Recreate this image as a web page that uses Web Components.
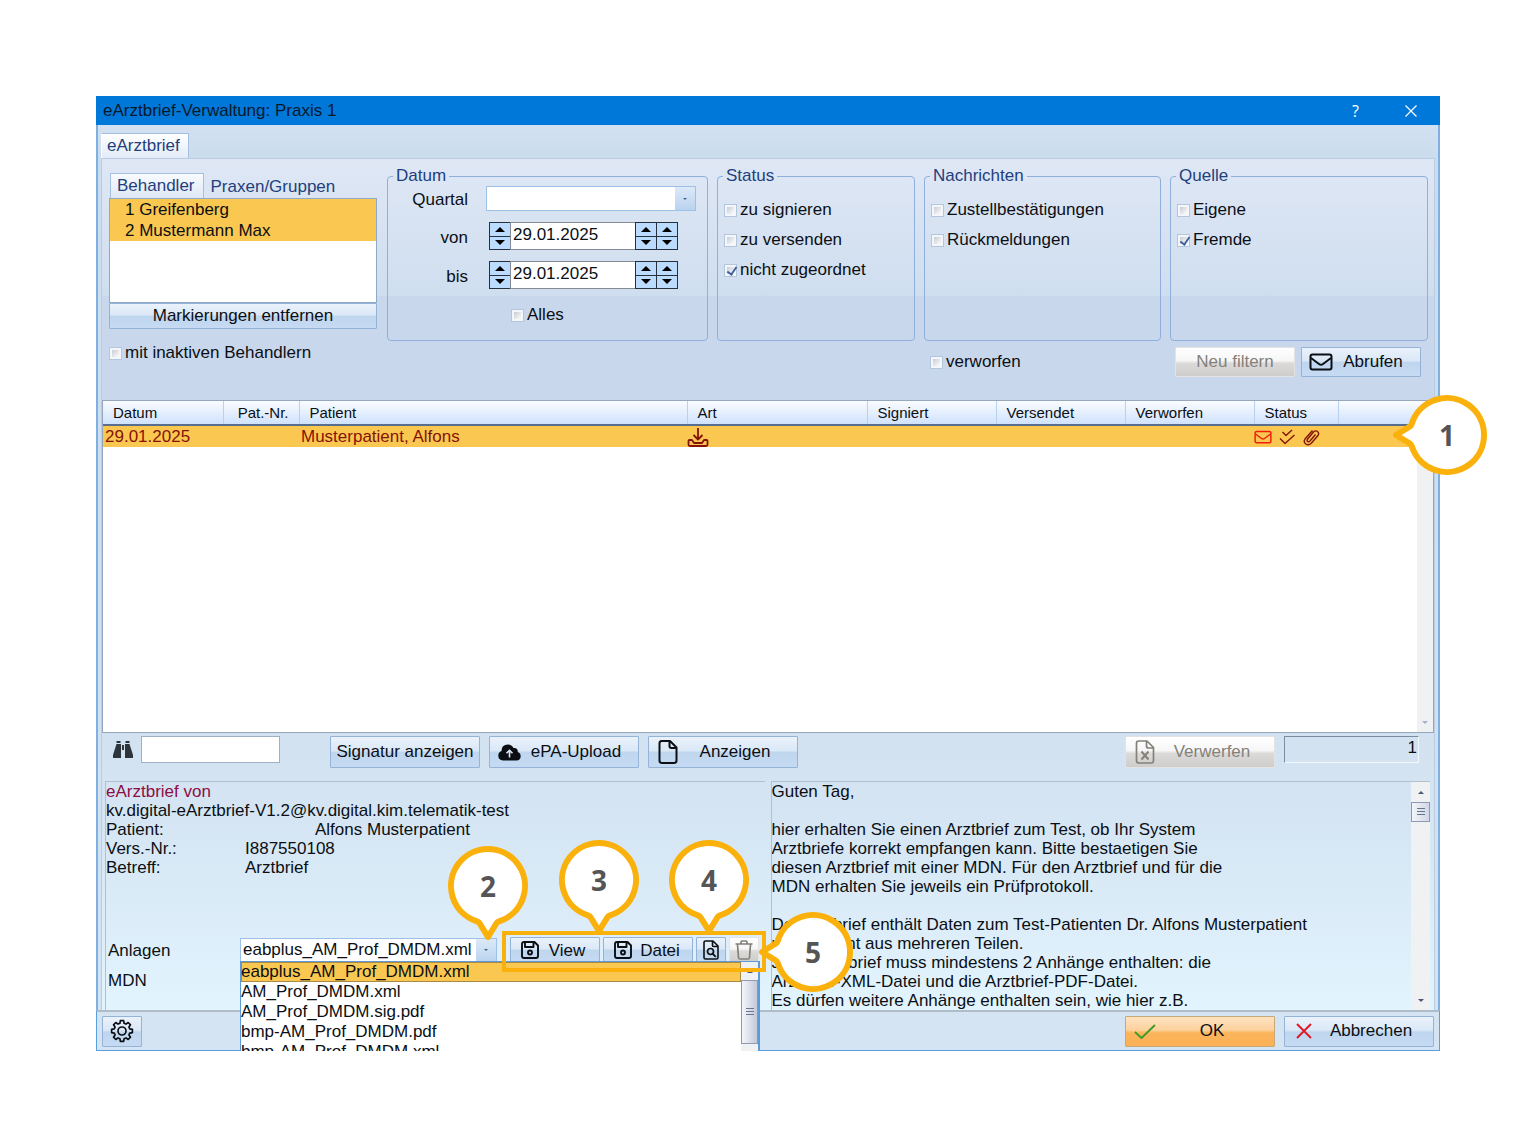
<!DOCTYPE html>
<html lang="de">
<head>
<meta charset="utf-8">
<title>eArztbrief-Verwaltung</title>
<style>
    body {
        margin: 0;
        padding: 96px;
        background: #fff;
        color: #0b0f14;
        font: 17px/20px "Liberation Sans", Arial, sans-serif;
        --line: #8fb0dc;
        --navy: #1f3f7d;
        --marked: #fac850;
        --accent: #fab10b;
        --btn: linear-gradient(#eaf2fb 0, #dbe8f7 45%, #bfd6ef 52%, #c6dbf3 100%);
    }
</style>
</head>
<body>

<ea-window caption="eArztbrief-Verwaltung: Praxis 1">
    <ea-filter></ea-filter>
    <ea-letters></ea-letters>
    <ea-toolbar></ea-toolbar>
    <ea-details>
        <ea-letter-info slot="info"></ea-letter-info>
        <ea-message slot="message">Guten Tag,

hier erhalten Sie einen Arztbrief zum Test, ob Ihr System
Arztbriefe korrekt empfangen kann. Bitte bestaetigen Sie
diesen Arztbrief mit einer MDN. Für den Arztbrief und für die
MDN erhalten Sie jeweils ein Prüfprotokoll.

Der Arztbrief enthält Daten zum Test-Patienten Dr. Alfons Musterpatient
und besteht aus mehreren Teilen.
Jeder Arztbrief muss mindestens 2 Anhänge enthalten: die
Arztbrief-XML-Datei und die Arztbrief-PDF-Datei.
Es dürfen weitere Anhänge enthalten sein, wie hier z.B.</ea-message>
    </ea-details>
    <ea-button slot="settings" icon="gear" label="Einstellungen" compact></ea-button>
    <ea-button slot="actions" icon="check" variant="primary">OK</ea-button>
    <ea-button slot="actions" icon="cross">Abbrechen</ea-button>
</ea-window>

<script>
(function() {
    'use strict';

    // Registers an element whose shadow root is cloned from a template.
    // "{attr}" in the markup is replaced by the host's attribute.
    function define(name, css, html, setup) {
        customElements.define(name, class extends HTMLElement {
            constructor() {
                super();
                this.attachShadow({ mode: 'open' });
            }
            connectedCallback() {
                if (this.shadowRoot.firstChild) return;
                var host = this;
                var tpl = document.createElement('template');
                tpl.innerHTML = '<style>:host,*{box-sizing:border-box}' + css + '</style>' +
                    html.replace(/\{(\w+)\}/g, function(m, key) {
                        return host.getAttribute(key) || '';
                    });
                this.shadowRoot.appendChild(tpl.content.cloneNode(true));
                if (setup) setup.call(this, this.shadowRoot);
            }
        });
    }

    /* ---------- icons ---------- */

    // Outline of a cog with eight teeth, centred in a 24 unit box.
    function gearPath() {
        var pts = [];
        for (var i = 0; i < 8; i++) {
            [[-15, 8], [-9, 10.500], [9, 10.500], [15, 8]].forEach(function(p) {
                var a = (i * 45 + p[0]) * Math.PI / 180;
                pts.push((12 + p[1] * Math.cos(a)).toFixed(2) + ' ' + (12 + p[1] * Math.sin(a)).toFixed(2));
            });
        }
        return 'M' + pts.join('L') + 'z';
    }

    var ICONS = {
        mail: [24, 18, '<rect x="1.500" y="1.500" width="21" height="15" rx="2"/><path d="M2 5l8 6q2 1.500 4 0l8-6"/>'],
        close: [12, 12, '<path d="M.5.5l11 11M11.500.5l-11 11" stroke-width="1.200"/>'],
        inbox: [22, 20, '<path d="M11 1v11M6.500 8l4.500 4.500L15.500 8M5 13H2.500Q1.500 13 1.500 14v3.500Q1.500 19 3 19h16q1.500 0 1.500-1.500V14q0-1-1-1H17l-2 3H7z" stroke-width="1.800"/>'],
        checks: [16, 16, '<path d="M3.500 3l3.500 3.500L13 1M1 9.500l5 5L15.500 6" stroke-width="1.400"/>'],
        clip: [17, 18, '<path d="M12.500 6.500l-5.500 6.500q-1.500 1.500-2.500.5t.2-2.500L10.500 4q2-2 4-.5t.5 4L8.500 15q-3 3-5.700 1T2 11L9.500 2.500" stroke-width="1.400"/>'],
        binoculars: [20, 19, '<path d="M3.500 1h4v2h-4zM12.500 1h4v2h-4z" fill="currentColor" stroke="none"/><path d="M3.500 4h4.500v14H0v-3zM16.500 4H12v14h8v-3zM9 5h2v5H9z" fill="currentColor" stroke="none"/>'],
        cloud: [23, 17, '<path d="M5 16.500Q.3 16 .3 11.500.3 8 3.500 7 3.500.5 9.800.5q4 0 5.700 3.500Q20 3.500 19.800 8q2.900 1 2.900 4.200 0 4-4.200 4.300z" fill="currentColor" stroke="none"/><path d="M11.500 13.500V6.500M8.500 9.200l3-3 3 3" stroke="#dbe8f7" stroke-width="1.600"/>'],
        file: [20, 24, '<path d="M3.500 1H12l6.500 6.500V20.500Q18.500 23 16 23H4Q1.500 23 1.500 20.500V3.500Q1.500 1 3.500 1zM11.500 1.500V6q0 2 2 2h4.500" stroke-width="2"/>'],
        filex: [20, 24, '<path d="M3.500 1H12l6.500 6.500V20.500Q18.500 23 16 23H4Q1.500 23 1.500 20.500V3.500Q1.500 1 3.500 1zM11.500 1.500V6q0 2 2 2h4.500" stroke-width="1.700"/><path d="M6.500 11.500l7 8M13.500 11.500l-7 8" stroke-width="2"/>'],
        disk: [18, 18, '<path d="M3 1h10.500L17 4.500V15q0 2-2 2H3q-2 0-2-2V3q0-2 2-2zM4 1v5h8.500V1" stroke-width="1.900"/><circle cx="9" cy="11.500" r="2" stroke-width="1.900"/>'],
        search: [16, 20, '<path d="M2.500 1H10l5 5v11.500q0 1.500-1.500 1.500h-11Q1 19 1 17.500v-15Q1 1 2.500 1zM9.500 1v4.500q0 1 1 1H15" stroke-width="1.600"/><circle cx="7.500" cy="11.500" r="3" stroke-width="1.700"/><path d="M9.800 13.800l3 3" stroke-width="1.900"/>'],
        trash: [18, 20, '<path d="M.5 4h17M5.500 4l1-3h5l1 3M2.500 4.500l1 13Q3.700 19 5 19h8q1.300 0 1.500-1.500l1-13" stroke-width="1.700"/>'],
        gear: [24, 24, '<path d="' + gearPath() + '" stroke-width="1.700"/><circle cx="12" cy="12" r="4" stroke-width="1.700"/>'],
        check: [22, 15, '<path d="M1 8l6.500 6L21 1" stroke="#3c9a27" stroke-width="1.800"/>'],
        cross: [16, 16, '<path d="M1 1l14 14M15 1L1 15" stroke="#e01826" stroke-width="1.900"/>']
    };

    define('ea-icon',
        ':host{display:inline-flex;flex:none}svg{display:block;fill:none;stroke:currentColor;stroke-width:2;stroke-linejoin:round}',
        '<slot></slot>',
        function(root) {
            var icon = ICONS[this.getAttribute('name')];
            var width = parseInt(this.getAttribute('width')) || icon[0];
            root.innerHTML += '<svg aria-hidden="true" width="' + width + '" height="' +
                Math.round(icon[1] * width / icon[0]) + '" viewBox="0 0 ' + icon[0] + ' ' + icon[1] + '">' + icon[2] + '</svg>';
        });

    /* ---------- controls ---------- */

    define('ea-button', `
        :host { display: block; width: 150px; height: 31px; }
        :host([compact]) { width: 40px; }
        button {
            display: flex; align-items: center;
            width: 100%; height: 100%;
            padding: 0 7px;
            border: 1px solid #94b3d6; border-radius: 1px;
            background: var(--btn);
            color: inherit; font: inherit; white-space: nowrap;
        }
        .icon { flex: none; display: flex; justify-content: center; width: 24px; }
        .text { flex: 1; text-align: center; }
        :host([compact]) button { padding: 0; justify-content: center; }
        :host([compact]) .text { display: none; }
        :host([plain]) button { padding: 0; }
        :host([plain]) .icon { display: none; }
        :host([variant=primary]) button {
            border-color: #c9a878;
            background: linear-gradient(#fde3c2 0, #fdd19c 45%, #fbb45a 55%, #fcb057 100%);
        }
        button:disabled {
            border-color: #e3e3e3;
            background: linear-gradient(#fff 0, #f6f6f6 45%, #dcdad9 55%, #cfcdcc 100%);
            color: #84817a;
        }`,
        '<button type="button" aria-label="{label}"><span class="icon"></span><span class="text"><slot></slot></span></button>',
        function(root) {
            var btn = root.querySelector('button');
            btn.disabled = this.hasAttribute('disabled');
            if (!this.getAttribute('label')) btn.removeAttribute('aria-label');
            if (this.getAttribute('icon')) {
                root.querySelector('.icon').innerHTML = '<ea-icon name="' + this.getAttribute('icon') + '"></ea-icon>';
            }
        });

    define('ea-check', `
        :host { display: block; }
        label { display: inline-flex; align-items: center; gap: 3px; height: 30px; white-space: nowrap; }
        input {
            appearance: none; margin: 0; width: 13px; height: 13px;
            border: 1px solid #b3c6de;
            background: linear-gradient(135deg, #b9bec8, #fbfbfb 80%);
            box-shadow: inset 0 0 0 2px #f3f6fa;
        }
        input:checked::after {
            content: ""; display: block;
            width: 4px; height: 8px; margin: 0 0 0 4px;
            border: solid #41639c; border-width: 0 2px 2px 0;
            transform: rotate(35deg);
        }`,
        '<label><input type="checkbox"><span><slot></slot></span></label>',
        function(root) {
            root.querySelector('input').checked = this.hasAttribute('checked');
        });

    define('ea-group', `
        :host { display: grid; }
        fieldset {
            min-width: 0; margin: 0; padding: 0 6px;
            border: 1px solid var(--line); border-radius: 4px;
        }
        legend { margin-left: -1px; padding: 0 3px; color: var(--navy); }
        .checks { padding-top: 9px; }`,
        '<fieldset><legend>{caption}</legend><div class="checks"><slot></slot></div></fieldset>');

    define('ea-select', `
        :host { display: grid; height: 25px; }
        select, .arrow { grid-area: 1 / 1; }
        select {
            appearance: none; width: 100%; min-width: 0; height: 100%;
            padding: 0 2px 2px; border: 1px solid #9dc0e6; border-radius: 0;
            background: #fff; color: inherit; font: inherit;
        }
        .arrow {
            justify-self: end; align-self: stretch; display: grid; place-items: center;
            width: 20px; margin: 1px; background: linear-gradient(#dce9f8, #b9d3ee);
            pointer-events: none;
        }
        .arrow::after { content: ""; border: 2px solid transparent; border-top-color: #44608c; border-bottom: 0; }`,
        '<select aria-label="{label}"><option>{value}</option></select><span class="arrow"></span>');

    define('ea-spin', `
        :host { display: grid; width: 22px; margin-left: -1px; }
        button {
            display: grid; place-items: center; padding: 0;
            border: 1px solid #27313d; background: #bcdcff;
        }
        button + button { margin-top: -1px; }
        i { border: 5px solid transparent; border-bottom: 5px solid #000; border-top: 0; }
        .down i { border-bottom: 0; border-top: 5px solid #000; }`,
        '<button type="button" aria-label="Erhöhen"><i></i></button>' +
        '<button type="button" class="down" aria-label="Verringern"><i></i></button>');

    define('ea-date', `
        :host { display: grid; grid-template-columns: 74px minmax(0, 188px); column-gap: 22px; height: 28px; }
        label { align-self: center; text-align: right; padding-top: 4px; }
        .box { display: flex; }
        input {
            flex: 1; min-width: 0; width: 0; margin-left: -1px; padding: 0 2px 3px;
            border: 1px solid #848b94; background: #fff; color: inherit; font: inherit;
        }`,
        '<label for="d">{label}</label><div class="box"><ea-spin></ea-spin><input id="d" value="29.01.2025"><ea-spin></ea-spin><ea-spin></ea-spin></div>');

    define('ea-scrollbar', `
        :host { display: flex; flex-direction: column; align-items: center; width: 19px; background: #f0f1f3; }
        .arrow { height: 20px; display: grid; align-items: center; }
        .arrow::after { content: ""; border: 3px solid transparent; border-top: 3px solid #4b5870; border-bottom: 0; }
        .up::after { border-top: 0; border-bottom: 3px solid #4b5870; }
        :host([idle]) .up, :host([idle]) .thumb { visibility: hidden; }
        :host([idle]) .arrow::after { border-top-color: #a5b0cc; }
        .thumb {
            display: grid; place-items: center; width: 100%; height: 20px;
            border: 1px solid #8d9ab0; background: linear-gradient(90deg, #f2f5fa, #cfd7e6);
        }
        :host([long]) .thumb { height: 68px; background: linear-gradient(90deg, #f0f2f8 10%, #c3c9d9); }
        .thumb::after {
            content: ""; width: 8px; height: 8px;
            background: repeating-linear-gradient(#69758c 0 1px, transparent 1px 3px);
        }
        .down { margin-top: auto; }`,
        '<span class="arrow up"></span><span class="thumb"></span><span class="arrow down"></span>');

    // Numbered marker; the tip points down or to the left.
    define('ea-pin', `
        :host { position: absolute; z-index: 3; display: grid; place-items: center; width: 80px; height: 80px; }
        svg { grid-area: 1 / 1; width: 80px; height: 80px; overflow: visible; }
        :host([left]) svg { transform: rotate(90deg); }
        path { fill: #fff; stroke: var(--accent); stroke-width: 6; stroke-linejoin: round; }
        span { grid-area: 1 / 1; z-index: 1; color: #555; font: bold 28px/32px "Noto Sans", sans-serif; }`,
        '<svg viewBox="-40 -40 80 80" aria-hidden="true"><path d="M-11 35.300A37 37 0 1 1 11 35.300Q9 36 8 38L0 51L-8 38Q-9 36-11 35.300z"/></svg><span><slot></slot></span>');

    /* ---------- window ---------- */

    define('ea-window', `
        :host {
            display: block; overflow-x: visible; overflow-y: clip;
            background: linear-gradient(#d8e6f3, #cbdcee 60px, #d5e4f3);
        }
        header { display: flex; align-items: center; height: 29px; padding: 0 7px; background: #0078d9; color: #07182e; }
        h1 { flex: 1; margin: 0; font: inherit; }
        header button {
            display: grid; place-items: center; width: 55px; height: 29px; padding: 0;
            border: 0; background: none; color: #fff; font: 16px "Open Sans", sans-serif;
        }
        header button:last-child { margin-right: -5px; }
        main { padding: 8px 0 0; border: solid #7fb0e2; border-width: 0 2px; }
        nav { display: flex; padding-left: 3px; }
        nav a {
            padding: 2px 8px 2px 5px; border: 1px solid #a7bfde; border-bottom: 0;
            border-left-color: #fff; background: linear-gradient(#fff, #e2ebf7);
            color: var(--navy); text-decoration: none;
        }
        .page {
            margin: 0 3px; min-height: 852px; border: solid #b9cce2; border-width: 1px 1px 0;
            background: linear-gradient(#dfe7f5 0, #cfdeef 137px, #c8d7ec 137px, #c8d7ec 300px, #d3e2f1 580px, #d5e5f3 660px, #e2f4fe 852px);
        }
        footer {
            display: flex; align-items: center; gap: 9px; height: 41px; padding: 0 5px;
            border: solid #5a9fdf; border-width: 0 1px 1px; border-top: 2px solid #b1bcc9;
            background: #d5e4f3;
        }
        .gap { flex: 1; }`,
        `<header><h1>{caption}</h1>
            <button type="button">?</button>
            <button type="button" aria-label="Schließen"><ea-icon name="close"></ea-icon></button></header>
        <main><nav><a href="#earztbrief">eArztbrief</a></nav><div class="page"><slot></slot></div></main>
        <footer><slot name="settings"></slot><span class="gap"></span><slot name="actions"></slot></footer>`);

    define('ea-filter', `
        :host { display: grid; grid-template-columns: 268px minmax(0, 1fr); gap: 10px; padding: 7px 6px 23px 7px; }
        .people { padding-top: 7px; }
        nav { display: flex; gap: 7px; padding-left: 1px; }
        nav a { padding: 4px 0 0; color: var(--navy); text-decoration: none; }
        nav a[aria-current] {
            padding: 2px 8px 2px 6px; border: 1px solid #a7bfde; border-bottom: 0;
            background: linear-gradient(#f8fbff, #dfe8f6);
        }
        ul { list-style: none; height: 105px; margin: 0; padding: 0; border: 1px solid #8fa9c8; background: #fff; }
        li { height: 21px; padding-left: 15px; line-height: 22px; background: var(--marked); }
        .people ea-button { width: auto; height: 26px; }
        .people ea-check { margin-top: 9px; }
        .groups {
            display: grid; grid-template: minmax(175px, auto) auto / 321fr 198fr 237fr 258fr;
            gap: 6px 9px; align-content: start;
        }
        .period { display: grid; gap: 11px; margin-top: -9px; }
        .quarter { display: grid; grid-template-columns: 74px minmax(0, 210px); column-gap: 18px; }
        .quarter span { text-align: right; padding-top: 4px; }
        .period ea-check { padding-left: 117px; }
        .rejected { grid-column: 3; padding-left: 6px; }
        .run { display: flex; gap: 6px; justify-content: end; padding-right: 7px; }
        .run ea-button { width: 120px; height: 30px; }`,
        `<section class="people">
            <nav><a href="#behandler" aria-current="page">Behandler</a><a href="#praxen">Praxen/Gruppen</a></nav>
            <ul><li>1 Greifenberg</li><li>2 Mustermann Max</li></ul>
            <ea-button plain>Markierungen entfernen</ea-button>
            <ea-check>mit inaktiven Behandlern</ea-check>
        </section>
        <section class="groups">
            <ea-group caption="Datum"><div class="period">
                <div class="quarter"><span>Quartal</span><ea-select label="Quartal"></ea-select></div>
                <ea-date label="von"></ea-date>
                <ea-date label="bis"></ea-date>
                <ea-check>Alles</ea-check>
            </div></ea-group>
            <ea-group caption="Status">
                <ea-check>zu signieren</ea-check>
                <ea-check>zu versenden</ea-check>
                <ea-check checked>nicht zugeordnet</ea-check>
            </ea-group>
            <ea-group caption="Nachrichten">
                <ea-check>Zustellbestätigungen</ea-check>
                <ea-check>Rückmeldungen</ea-check>
            </ea-group>
            <ea-group caption="Quelle">
                <ea-check>Eigene</ea-check>
                <ea-check checked>Fremde</ea-check>
            </ea-group>
            <ea-check class="rejected">verworfen</ea-check>
            <div class="run">
                <ea-button plain disabled>Neu filtern</ea-button>
                <ea-button icon="mail">Abrufen</ea-button>
            </div>
        </section>`);

    define('ea-letters', `
        :host {
            position: relative; display: flex; flex-direction: column; height: 333px;
            border: 1px solid #97a7bb; background: #fff;
        }
        table { width: 100%; table-layout: fixed; border-collapse: collapse; }
        th {
            height: 24px; padding: 0 10px; border-right: 1px solid #b9d0ee;
            background: linear-gradient(#fafcff, #cfe2fd); font-size: 15px; font-weight: normal; text-align: left;
        }
        th:last-child { border: 0; }
        .num { text-align: right; }
        thead tr { border-bottom: 2px solid #596d8c; }
        td { height: 22px; padding: 0 2px; background: var(--marked); color: #861207; white-space: nowrap; }
        td ea-icon { vertical-align: middle; }
        .state { padding: 0; overflow: visible; }
        .state div { display: flex; align-items: center; gap: 8px; }
        .state ea-icon:first-child { color: #f01f0c; margin-right: -1px; }
        .art { padding: 0; line-height: 0; }
        ea-scrollbar { flex: 1; align-self: end; width: 16px; }
        ea-pin { right: -54px; top: -6px; }`,
        `<table>
            <colgroup><col style="width:120px"><col style="width:76px"><col><col style="width:180px"><col style="width:129px"><col style="width:129px"><col style="width:129px"><col style="width:84px"><col style="width:95px"></colgroup>
            <thead><tr><th>Datum</th><th class="num">Pat.-Nr.</th><th>Patient</th><th>Art</th><th>Signiert</th><th>Versendet</th><th>Verworfen</th><th>Status</th><th></th></tr></thead>
            <tbody><tr><td>29.01.2025</td><td></td><td>Musterpatient, Alfons</td><td class="art"><ea-icon name="inbox"></ea-icon></td><td></td><td></td><td></td>
            <td class="state"><div><ea-icon name="mail" width="18"></ea-icon><ea-icon name="checks"></ea-icon><ea-icon name="clip"></ea-icon></div></td><td></td></tr></tbody>
        </table>
        <ea-scrollbar idle></ea-scrollbar>
        <ea-pin left>1</ea-pin>`);

    define('ea-toolbar', `
        :host { display: flex; gap: 9px; align-items: start; height: 48px; padding: 3px 15px 0 11px; }
        :host > * { flex: none; }
        label { display: flex; gap: 8px; align-items: center; margin-right: 41px; color: #2e343c; }
        input { height: 27px; border: 1px solid #a0b0c4; border-radius: 0; background: #fff; font: inherit; color: #0b0f14; }
        label input { width: 139px; }
        ea-button { height: 32px; }
        .gap { flex: 1; }
        .count { width: 135px; padding: 0 1px 3px; border-color: #7d8ca0 #f4f8fc #f4f8fc #7d8ca0; background: none; text-align: right; }`,
        `<label><ea-icon name="binoculars"></ea-icon><input type="text" aria-label="Suchen"></label>
        <ea-button plain>Signatur anzeigen</ea-button>
        <ea-button icon="cloud">ePA-Upload</ea-button>
        <ea-button icon="file">Anzeigen</ea-button>
        <span class="gap"></span>
        <ea-button icon="filex" disabled>Verwerfen</ea-button>
        <input class="count" readonly value="1" aria-label="Anzahl">`);

    define('ea-details', `
        :host { display: grid; grid-template-columns: 1fr 1fr; gap: 6px; height: 229px; padding: 0 4px 0 3px; }`,
        '<slot name="info"></slot><slot name="message"></slot>');

    define('ea-message', `
        :host { display: flex; min-width: 0; border: 1px solid #b2bfcc; border-width: 1px 0 0 1px; overflow: hidden; }
        .text { flex: 1; line-height: 19px; white-space: pre; overflow: hidden; }`,
        '<div class="text" tabindex="0"><slot></slot></div><ea-scrollbar></ea-scrollbar>');

    define('ea-letter-info', `
        :host { position: relative; display: block; border: 1px solid #b2bfcc; border-width: 1px 0 0 1px; line-height: 19px; }
        p { margin: 0; }
        .from { color: #8d0d45; }
        dl { display: grid; grid-template-columns: 139px 1fr; margin: 0; }
        dd { margin: 0; }
        .patient { padding-left: 70px; }
        .attachments {
            position: relative; display: grid; grid-template-columns: 132px 257px auto; align-items: center;
            justify-content: start; height: 25px; margin-top: 60px; padding-left: 2px;
        }
        .mdn { margin: 9px 0 0 2px; }
        .tools { position: relative; display: flex; gap: 3px; height: 26px; margin-left: 13px; }
        .tools ea-button { width: 90px; height: 26px; }
        .tools ea-button[compact] { width: 30px; }
        .tools::after {
            content: ""; position: absolute; z-index: 2; inset: -6px -7px -9px -8px;
            border: 4px solid var(--accent);
        }
        .popup {
            position: absolute; z-index: 1; left: 134px; top: 24px; display: flex; width: 520px; height: 102px;
            border: 1px solid #5d9ad8; border-right-width: 2px; background: #fff;
        }
        ul { flex: 1; list-style: none; margin: 0; padding: 0; line-height: 20px; }
        li[aria-selected] { background: var(--marked); box-shadow: inset 0 0 0 1px #a98a45; }
        ea-scrollbar { width: 17px; }
        .p2 { left: 342px; top: -91px; }
        .p3 { left: 453px; top: -97px; }
        .p4 { left: 563px; top: -97px; }
        .p5 { left: 667px; top: -25px; }`,
        `<p class="from">eArztbrief von</p>
        <p>kv.digital-eArztbrief-V1.2@kv.digital.kim.telematik-test</p>
        <dl><dt>Patient:</dt><dd class="patient">Alfons Musterpatient</dd>
            <dt>Vers.-Nr.:</dt><dd>I887550108</dd>
            <dt>Betreff:</dt><dd>Arztbrief</dd></dl>
        <div class="attachments">
            <span>Anlagen</span>
            <ea-select label="Anlagen" value="eabplus_AM_Prof_DMDM.xml"></ea-select>
            <div class="tools">
                <ea-button icon="disk">View</ea-button>
                <ea-button icon="disk">Datei</ea-button>
                <ea-button icon="search" label="Vorschau" compact></ea-button>
                <ea-button icon="trash" label="Löschen" compact disabled></ea-button>
            </div>
            <div class="popup">
                <ul role="listbox" aria-label="Anlagen">
                    <li role="option" aria-selected="true">eabplus_AM_Prof_DMDM.xml</li>
                    <li role="option">AM_Prof_DMDM.xml</li>
                    <li role="option">AM_Prof_DMDM.sig.pdf</li>
                    <li role="option">bmp-AM_Prof_DMDM.pdf</li>
                    <li role="option">bmp-AM_Prof_DMDM.xml</li>
                </ul>
                <ea-scrollbar long></ea-scrollbar>
            </div>
            <ea-pin class="p2">2</ea-pin>
            <ea-pin class="p3">3</ea-pin>
            <ea-pin class="p4">4</ea-pin>
            <ea-pin class="p5" left>5</ea-pin>
        </div>
        <p class="mdn">MDN</p>`);

})();
</script>
</body>
</html>
